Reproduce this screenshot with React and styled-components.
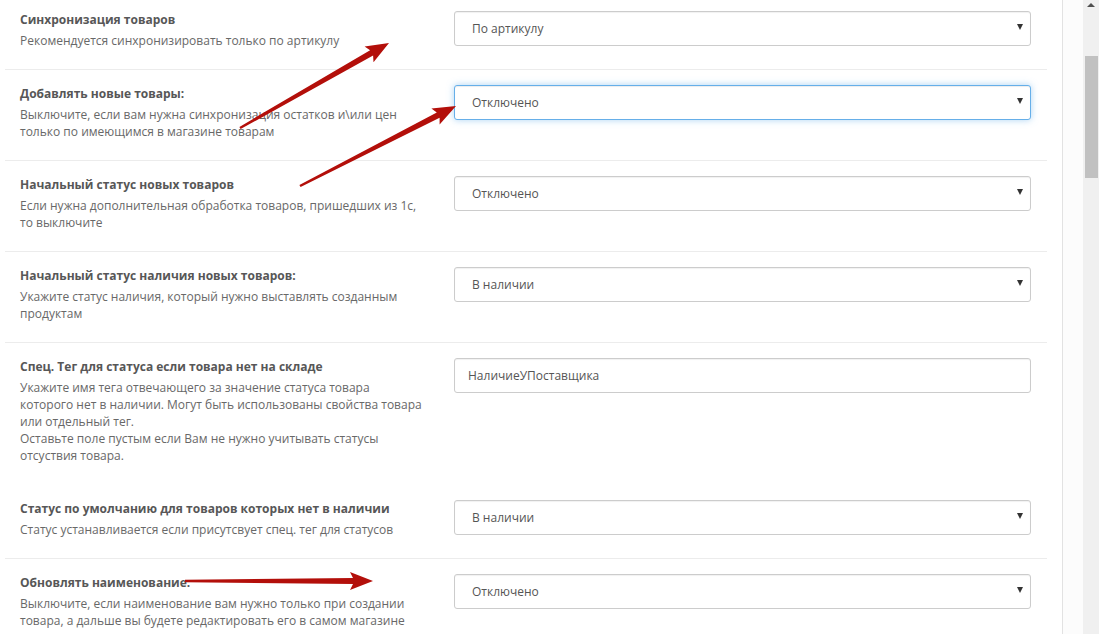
import React from "react";
import styled, { createGlobalStyle } from "styled-components";

const Global = createGlobalStyle`
  html, body { margin: 0; padding: 0; background: #fff; }
  body { font-family: "Open Sans", "Noto Sans", sans-serif; overflow: hidden; }
  * { box-sizing: border-box; }
`;

const Page = styled.div`
  position: relative;
  display: flex;
  width: 1099px;
  height: 634px;
  overflow: hidden;
  background: #fff;
`;

const Main = styled.div`
  width: 1062px;
  padding-left: 5px;
  padding-right: 15px;
  margin-top: -5px;
  display: flex;
  flex-direction: column;
`;

const Gutter = styled.div`
  width: 21px;
  border-left: 1px solid #e2e2e2;
  background: #fcfcfc;
`;

const Scrollbar = styled.div`
  width: 16px;
  background: #f0f0f0;
  display: flex;
  flex-direction: column;
  align-items: center;
`;

const ScrollArrow = styled.div`
  margin-top: 3px;
  width: 0;
  height: 0;
  border-left: 4px solid transparent;
  border-right: 4px solid transparent;
  border-bottom: 4px solid #505050;
`;

const ScrollThumb = styled.div`
  margin-top: 49px;
  width: 13px;
  height: 122px;
  margin-left: 1px;
  background: #c1c1c1;
`;

const Row = styled.div`
  display: grid;
  grid-template-columns: 419px 1fr;
  column-gap: 15px;
  padding: 15px 16px 20.5px 15px;
  border-top: 1px solid ${(p) => (p.$noBorder ? "transparent" : "#ececec")};
`;

const Label = styled.div`
  display: flex;
  flex-direction: column;
`;

const Title = styled.div`
  font-size: 12px;
  line-height: 18px;
  font-weight: 700;
  color: #575757;
  margin-bottom: 2.5px;
`;

const Desc = styled.div`
  font-size: 12px;
  line-height: 17px;
  color: #686868;
`;

const Control = styled.div``;

const SelectBox = styled.div`
  height: 35px;
  display: flex;
  align-items: center;
  justify-content: space-between;
  padding: 0 7px 0 17px;
  border: 1px solid ${(p) => (p.$focused ? "#66afe9" : "#cccccc")};
  border-radius: 3px;
  background: #fff;
  box-shadow: ${(p) =>
    p.$focused
      ? "inset 0 1px 1px rgba(0,0,0,.075), 0 0 7px rgba(102,175,233,.55)"
      : "inset 0 1px 1px rgba(0,0,0,.06)"};
  font-size: 12px;
  color: #555;
`;

const Caret = styled.span`
  width: 0;
  height: 0;
  margin-top: -3px;
  border-left: 3.5px solid transparent;
  border-right: 3.5px solid transparent;
  border-top: 6px solid #333;
`;

const TextInput = styled.input`
  width: 100%;
  height: 35px;
  padding: 0 13px;
  border: 1px solid #cccccc;
  border-radius: 3px;
  box-shadow: inset 0 1px 1px rgba(0,0,0,.06);
  font-family: "Open Sans", "Noto Sans", sans-serif;
  font-size: 12px;
  color: #555;
  outline: none;
  display: block;
`;

const Overlay = styled.svg`
  position: absolute;
  left: 0;
  top: 0;
  pointer-events: none;
`;

function Select({ value, focused }) {
  return (
    <SelectBox $focused={focused}>
      <span>{value}</span>
      <Caret />
    </SelectBox>
  );
}

function arrowPoints(tx, ty, hx, hy, w0, w1, headLen, headW) {
  const dx = hx - tx;
  const dy = hy - ty;
  const len = Math.hypot(dx, dy);
  const ux = dx / len;
  const uy = dy / len;
  const nx = -uy;
  const ny = ux;
  const bx = hx - ux * headLen;
  const by = hy - uy * headLen;
  const pts = [
    [tx + nx * w0 / 2, ty + ny * w0 / 2],
    [bx + nx * w1 / 2, by + ny * w1 / 2],
    [bx + nx * headW / 2 - ux * 3, by + ny * headW / 2 - uy * 3],
    [hx, hy],
    [bx - nx * headW / 2 - ux * 3, by - ny * headW / 2 - uy * 3],
    [bx - nx * w1 / 2, by - ny * w1 / 2],
    [tx - nx * w0 / 2, ty - ny * w0 / 2],
  ];
  return pts.map((p) => p.map((v) => v.toFixed(1)).join(",")).join(" ");
}

const arrows = [
  [240, 128, 389, 43],
  [300, 186, 456, 106],
  [185, 581, 373, 581],
];

const rows = [
  {
    title: "Синхронизация товаров",
    desc: ["Рекомендуется синхронизировать только по артикулу"],
    control: { type: "select", value: "По артикулу" },
  },
  {
    title: "Добавлять новые товары:",
    desc: [
      "Выключите, если вам нужна синхронизация остатков и\\или цен",
      "только по имеющимся в магазине товарам",
    ],
    control: { type: "select", value: "Отключено", focused: true },
  },
  {
    title: "Начальный статус новых товаров",
    desc: [
      "Если нужна дополнительная обработка товаров, пришедших из 1с,",
      "то выключите",
    ],
    control: { type: "select", value: "Отключено" },
  },
  {
    title: "Начальный статус наличия новых товаров:",
    desc: [
      "Укажите статус наличия, который нужно выставлять созданным",
      "продуктам",
    ],
    control: { type: "select", value: "В наличии" },
  },
  {
    title: "Спец. Тег для статуса если товара нет на складе",
    desc: [
      "Укажите имя тега отвечающего за значение статуса товара",
      "которого нет в наличии. Могут быть использованы свойства товара",
      "или отдельный тег.",
      "Оставьте поле пустым если Вам не нужно учитывать статусы",
      "отсуствия товара.",
    ],
    control: { type: "input", value: "НаличиеУПоставщика" },
  },
  {
    title: "Статус по умолчанию для товаров которых нет в наличии",
    desc: ["Статус устанавливается если присутсвует спец. тег для статусов"],
    control: { type: "select", value: "В наличии" },
    noBorder: true,
  },
  {
    title: "Обновлять наименование:",
    desc: [
      "Выключите, если наименование вам нужно только при создании",
      "товара, а дальше вы будете редактировать его в самом магазине",
    ],
    control: { type: "select", value: "Отключено" },
  },
];

export default function App() {
  return (
    <Page>
      <Global />
      <Main>
        {rows.map((r, i) => (
          <Row key={i} $noBorder={r.noBorder}>
            <Label>
              <Title>{r.title}</Title>
              <Desc>
                {r.desc.map((line, j) => (
                  <React.Fragment key={j}>
                    {j > 0 && <br />}
                    {line}
                  </React.Fragment>
                ))}
              </Desc>
            </Label>
            <Control>
              {r.control.type === "select" ? (
                <Select value={r.control.value} focused={r.control.focused} />
              ) : (
                <TextInput readOnly defaultValue={r.control.value} />
              )}
            </Control>
          </Row>
        ))}
      </Main>
      <Gutter />
      <Scrollbar>
        <ScrollArrow />
        <ScrollThumb />
      </Scrollbar>
      <Overlay width="1099" height="634" viewBox="0 0 1099 634">
        {arrows.map((a, i) => (
          <polygon
            key={i}
            points={arrowPoints(a[0], a[1], a[2], a[3], 2.5, 6, 20, 18)}
            fill="#b30f0a"
          />
        ))}
      </Overlay>
    </Page>
  );
}
